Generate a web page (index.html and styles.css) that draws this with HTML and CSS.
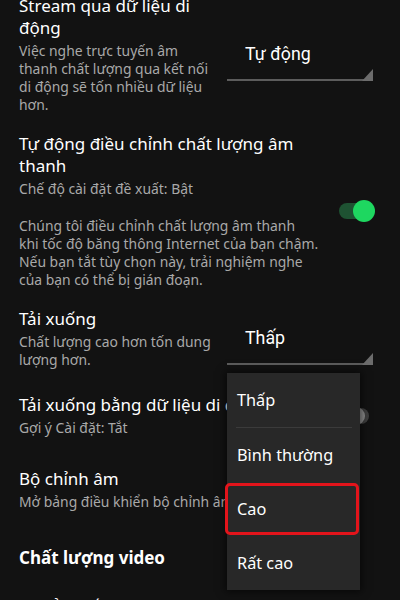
FILE: index.html
```html
<!DOCTYPE html>
<html lang="vi">
<head>
<meta charset="utf-8">
<title>Cài đặt</title>
<link rel="stylesheet" href="styles.css">
</head>
<body>
<div class="screen">
  <div class="settings">
    <div class="row">
      <div class="row-text narrow">
        <div class="title">Stream qua dữ liệu di động</div>
        <div class="desc">Việc nghe trực tuyến âm thanh chất lượng qua kết nối di động sẽ tốn nhiều dữ liệu hơn.</div>
      </div>
      <div class="spinner"><span>Tự động</span></div>
    </div>

    <div class="row">
      <div class="row-text wide">
        <div class="title">Tự động điều chỉnh chất lượng âm thanh</div>
        <div class="desc">Chế độ cài đặt đề xuất: Bật</div>
        <div class="desc para">Chúng tôi điều chỉnh chất lượng âm thanh<br>khi tốc độ băng thông Internet của bạn chậm.<br>Nếu bạn tắt tùy chọn này, trải nghiệm nghe<br>của bạn có thể bị gián đoạn.</div>
      </div>
      <div class="switch on"><span class="track"></span><span class="knob"></span></div>
    </div>

    <div class="row">
      <div class="row-text narrow">
        <div class="title">Tải xuống</div>
        <div class="desc">Chất lượng cao hơn tốn dung lượng hơn.</div>
      </div>
      <div class="spinner"><span>Thấp</span></div>
    </div>

    <div class="row">
      <div class="row-text wide">
        <div class="title">Tải xuống bằng dữ liệu di động</div>
        <div class="desc">Gợi ý Cài đặt: Tắt</div>
      </div>
      <div class="switch off"><span class="track"></span><span class="knob"></span></div>
    </div>

    <div class="row">
      <div class="row-text full">
        <div class="title">Bộ chỉnh âm</div>
        <div class="desc nowrap">Mở bảng điều khiển bộ chỉnh âm</div>
      </div>
    </div>

    <h2 class="section">Chất lượng video</h2>

    <div class="row">
      <div class="row-text wide">
        <div class="title">Đã tải xuống Video</div>
      </div>
    </div>
  </div>

  <ul class="menu">
    <li class="menu-item current">Thấp</li>
    <li class="menu-item">Bình thường</li>
    <li class="menu-item marked">Cao<span class="mark"></span></li>
    <li class="menu-item">Rất cao</li>
  </ul>
</div>
</body>
</html>
```

FILE: styles.css
```css
* {
  box-sizing: border-box;
}

html, body {
  margin: 0;
  padding: 0;
  background: #121212;
}

body {
  font-family: "Noto Sans", "Open Sans", sans-serif;
  color: #ffffff;
}

.screen {
  position: relative;
  width: 400px;
  height: 600px;
  overflow: hidden;
  background: #121212;
}

.settings {
  margin-top: -14px;
  padding: 0 25px 0 19px;
}

/* one setting: text on the left, control on the right */
.row {
  display: flex;
  align-items: center;
  justify-content: space-between;
  min-height: 74px;
  padding: 9px 0;
}

.row + .row {
  padding-top: 10px;
}

.row-text {
  display: flex;
  flex-direction: column;
  justify-content: center;
}

.row-text.narrow { width: 195px; }
.row-text.wide { width: 316px; }
.row-text.full { width: 340px; }

.title {
  font-size: 17px;
  line-height: 22px;
  color: #ffffff;
}

.desc {
  margin-top: 3px;
  font-size: 13.9px;
  line-height: 18px;
  color: #a9a9a9;
}

.desc.para {
  margin-top: 19px;
}

.desc.nowrap {
  white-space: nowrap;
}

/* Android-style spinner with underline and corner triangle */
.spinner {
  position: relative;
  width: 146px;
  flex: 0 0 146px;
  margin-right: 2px;
  padding: 16px 0 15px 18px;
  border-bottom: 2px solid #5c5c5c;
  font-family: Roboto, "Noto Sans", sans-serif;
  font-size: 17.8px;
  line-height: 20px;
  color: #ffffff;
}

.spinner::after {
  content: "";
  position: absolute;
  right: 0;
  bottom: -2px;
  width: 11px;
  height: 12px;
  background: #6c6c6c;
  clip-path: polygon(100% 0, 100% 100%, 0 100%);
}

/* toggle switch */
.switch {
  position: relative;
  flex: 0 0 38px;
  width: 38px;
  height: 24px;
}

.switch .track {
  position: absolute;
  left: 2px;
  right: 6px;
  top: 4px;
  height: 16px;
  border-radius: 8px;
  background: #1e5232;
}

.switch .knob {
  position: absolute;
  top: 1px;
  width: 22px;
  height: 22px;
  border-radius: 50%;
  background: #1ed760;
}

.switch.on .knob {
  right: 0;
}

.switch.off .track {
  background: #3e3e3e;
}

.switch.off .knob {
  left: 10px;
  top: 3px;
  width: 18px;
  height: 18px;
  background: #8f8f8f;
}

.section {
  margin: 21px 0 0;
  font-size: 17px;
  line-height: 22px;
  font-weight: 700;
}

/* popup list of quality options */
.menu {
  position: absolute;
  left: 227px;
  top: 373px;
  width: 133px;
  margin: 0;
  padding: 0;
  list-style: none;
  background: #282828;
  box-shadow: 0 0 8px 2px rgba(0, 0, 0, 0.55);
  z-index: 2;
}

.menu-item {
  position: relative;
  display: flex;
  align-items: center;
  height: 54px;
  padding-left: 10px;
  font-size: 16.3px;
  color: #ffffff;
}

.menu-item.current {
  height: 55px;
  padding-bottom: 1px;
}

.menu-item.current::after {
  content: "";
  position: absolute;
  left: 9px;
  right: 8px;
  bottom: 0;
  height: 1px;
  background: #3b3b3b;
}

.mark {
  position: absolute;
  left: -2px;
  right: 1px;
  top: 1px;
  bottom: 1px;
  border: 3px solid #e3141b;
  border-radius: 5px;
}
```
